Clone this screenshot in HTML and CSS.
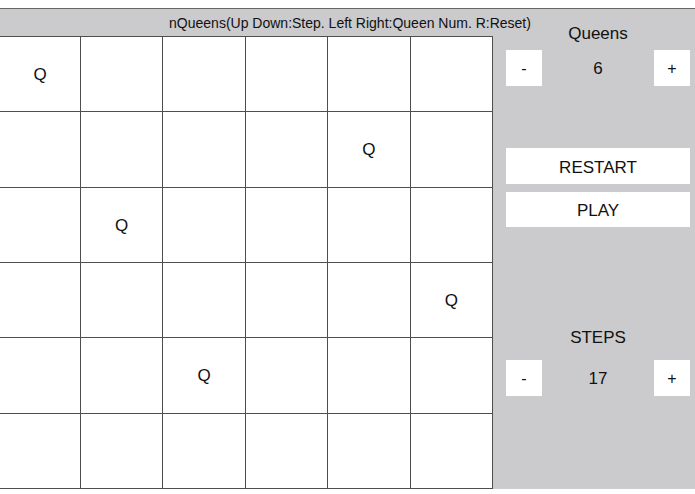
FILE: index.html
```html
<!DOCTYPE html>
<html>
<head>
<meta charset="utf-8">
<link rel="stylesheet" href="styles.css">
</head>
<body>
<div class="app">
  <div class="title">nQueens(Up Down:Step. Left Right:Queen Num. R:Reset)</div>
  <div class="board">
    <div class="cell">Q</div><div class="cell"></div><div class="cell"></div><div class="cell"></div><div class="cell"></div><div class="cell"></div>
    <div class="cell"></div><div class="cell"></div><div class="cell"></div><div class="cell"></div><div class="cell">Q</div><div class="cell"></div>
    <div class="cell"></div><div class="cell">Q</div><div class="cell"></div><div class="cell"></div><div class="cell"></div><div class="cell"></div>
    <div class="cell"></div><div class="cell"></div><div class="cell"></div><div class="cell"></div><div class="cell"></div><div class="cell">Q</div>
    <div class="cell"></div><div class="cell"></div><div class="cell">Q</div><div class="cell"></div><div class="cell"></div><div class="cell"></div>
    <div class="cell"></div><div class="cell"></div><div class="cell"></div><div class="cell"></div><div class="cell"></div><div class="cell"></div>
  </div>
  <div class="panel">
    <div class="label label-queens">Queens</div>
    <div class="counter counter-queens">
      <button class="btn-sq">-</button>
      <span class="value">6</span>
      <button class="btn-sq">+</button>
    </div>
    <button class="btn-wide btn-restart">RESTART</button>
    <button class="btn-wide btn-play">PLAY</button>
    <div class="label label-steps">STEPS</div>
    <div class="counter counter-steps">
      <button class="btn-sq">-</button>
      <span class="value">17</span>
      <button class="btn-sq">+</button>
    </div>
  </div>
</div>
</body>
</html>
```
FILE: styles.css
```css
html, body {
  margin: 0;
  padding: 0;
  background: #ffffff;
  font-family: "Liberation Sans", Arial, sans-serif;
  color: #111;
}

.app {
  margin-top: 8px;
  border-top: 1px solid #666;
  background: #cbcacc;
  height: 480px;
  width: 695px;
  display: grid;
  grid-template-columns: 493px 1fr;
  grid-template-rows: 27px 1fr;
}

.title {
  grid-column: 1 / 3;
  grid-row: 1;
  display: flex;
  align-items: center;
  justify-content: center;
  padding-left: 5px;
  padding-top: 1px;
  font-size: 14px;
  white-space: nowrap;
  position: relative;
  z-index: 1;
}

.board {
  grid-column: 1;
  grid-row: 2;
  display: grid;
  grid-template-columns: 80px repeat(5, 1fr);
  grid-template-rows: repeat(6, 1fr);
  gap: 1px;
  padding: 1px 1px 1px 0;
  background: #4f4f4f;
}

.cell {
  background: #ffffff;
  display: flex;
  align-items: center;
  justify-content: center;
  padding-top: 2px;
  font-size: 17px;
}

.panel {
  grid-column: 2;
  grid-row: 1 / 3;
  display: flex;
  flex-direction: column;
  padding: 0 5px 0 13px;
}

.label {
  height: 20px;
  line-height: 20px;
  text-align: center;
  font-size: 17px;
}

.label-queens { margin-top: 15px; }
.label-steps { margin-top: 101px; }

.counter {
  display: flex;
  justify-content: space-between;
  align-items: center;
  height: 36px;
}

.counter-queens { margin-top: 6px; }
.counter-steps { margin-top: 12px; }

.value {
  font-size: 17px;
  padding-top: 2px;
}

.btn-sq {
  width: 36px;
  height: 36px;
  border: none;
  background: #ffffff;
  font-family: "Liberation Sans", Arial, sans-serif;
  font-size: 16px;
  color: #111;
  padding: 2px 0 0;
}

.btn-wide {
  height: 36px;
  border: none;
  background: #ffffff;
  font-family: "Liberation Sans", Arial, sans-serif;
  font-size: 17px;
  color: #111;
  padding: 2px 0 0;
}

.btn-restart { margin-top: 62px; padding-top: 4px; }
.btn-play { margin-top: 8px; height: 35px; }
```
